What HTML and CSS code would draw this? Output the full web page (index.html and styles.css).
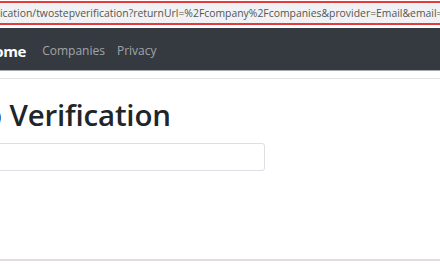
FILE: index.html
```html
<!DOCTYPE html>
<html lang="en">
<head>
    <meta charset="UTF-8">
    <title>Two-Step Verification</title>
    <link rel="stylesheet" href="styles.css">
</head>
<body>
    <div class="urlbar">
        <div class="url-field">ication/twostepverification?returnUrl=%2Fcompany%2Fcompanies&amp;provider=Email&amp;email=</div>
    </div>

    <nav class="navbar">
        <a class="brand" href="#">Home</a>
        <a class="nav-link" href="#">Companies</a>
        <a class="nav-link" href="#">Privacy</a>
    </nav>
    <div class="nav-gap"></div>

    <main class="content">
        <h1 class="title">Two Step Verification</h1>
        <input class="code-input" type="text">
    </main>

    <div class="bottom-line"></div>
</body>
</html>
```

FILE: styles.css
```css
html, body {
    margin: 0;
    padding: 0;
    height: 264px;
    overflow: hidden;
    background: #ffffff;
    font-family: "Open Sans", "Noto Sans", sans-serif;
}
body {
    display: flex;
    flex-direction: column;
}
.urlbar {
    height: 28px;
    padding-top: 1px;
    box-sizing: border-box;
    background: #ffffff;
    overflow: hidden;
}
.url-field {
    height: 24px;
    box-sizing: border-box;
    border-top: 2px solid #e53a3f;
    border-bottom: 2px solid #e53a3f;
    background: #f1f2f3;
    color: #555555;
    font-size: 10.4px;
    line-height: 20px;
    white-space: nowrap;
}
.navbar {
    height: 43px;
    background: #343a40;
    border-bottom: 1px solid #a9acaf;
    display: flex;
    align-items: center;
    gap: 12px;
    padding-top: 3px;
    box-sizing: border-box;
    overflow: hidden;
}
.brand {
    color: #ffffff;
    text-decoration: none;
    font-weight: 700;
    font-size: 15px;
    margin-left: -17px;
    margin-right: 4px;
    letter-spacing: -0.3px;
}
.nav-link {
    color: rgba(255, 255, 255, 0.55);
    text-decoration: none;
    font-size: 12px;
}
.nav-gap {
    height: 7px;
    border-bottom: 1px solid #e2e4e6;
}
.content {
    margin-left: -126px;
    flex: 1;
}
.title {
    margin: 18px 0 0;
    font-size: 29.5px;
    font-weight: 600;
    color: #212529;
    line-height: 36px;
    letter-spacing: -0.2px;
}
.code-input {
    display: block;
    margin-top: 10px;
    width: 391px;
    height: 28px;
    box-sizing: border-box;
    border: 1px solid #dcdfe3;
    border-radius: 3px;
    background: #fff;
}
.bottom-line {
    height: 2px;
    background: #e3dcdc;
    margin-bottom: 3px;
}
```
